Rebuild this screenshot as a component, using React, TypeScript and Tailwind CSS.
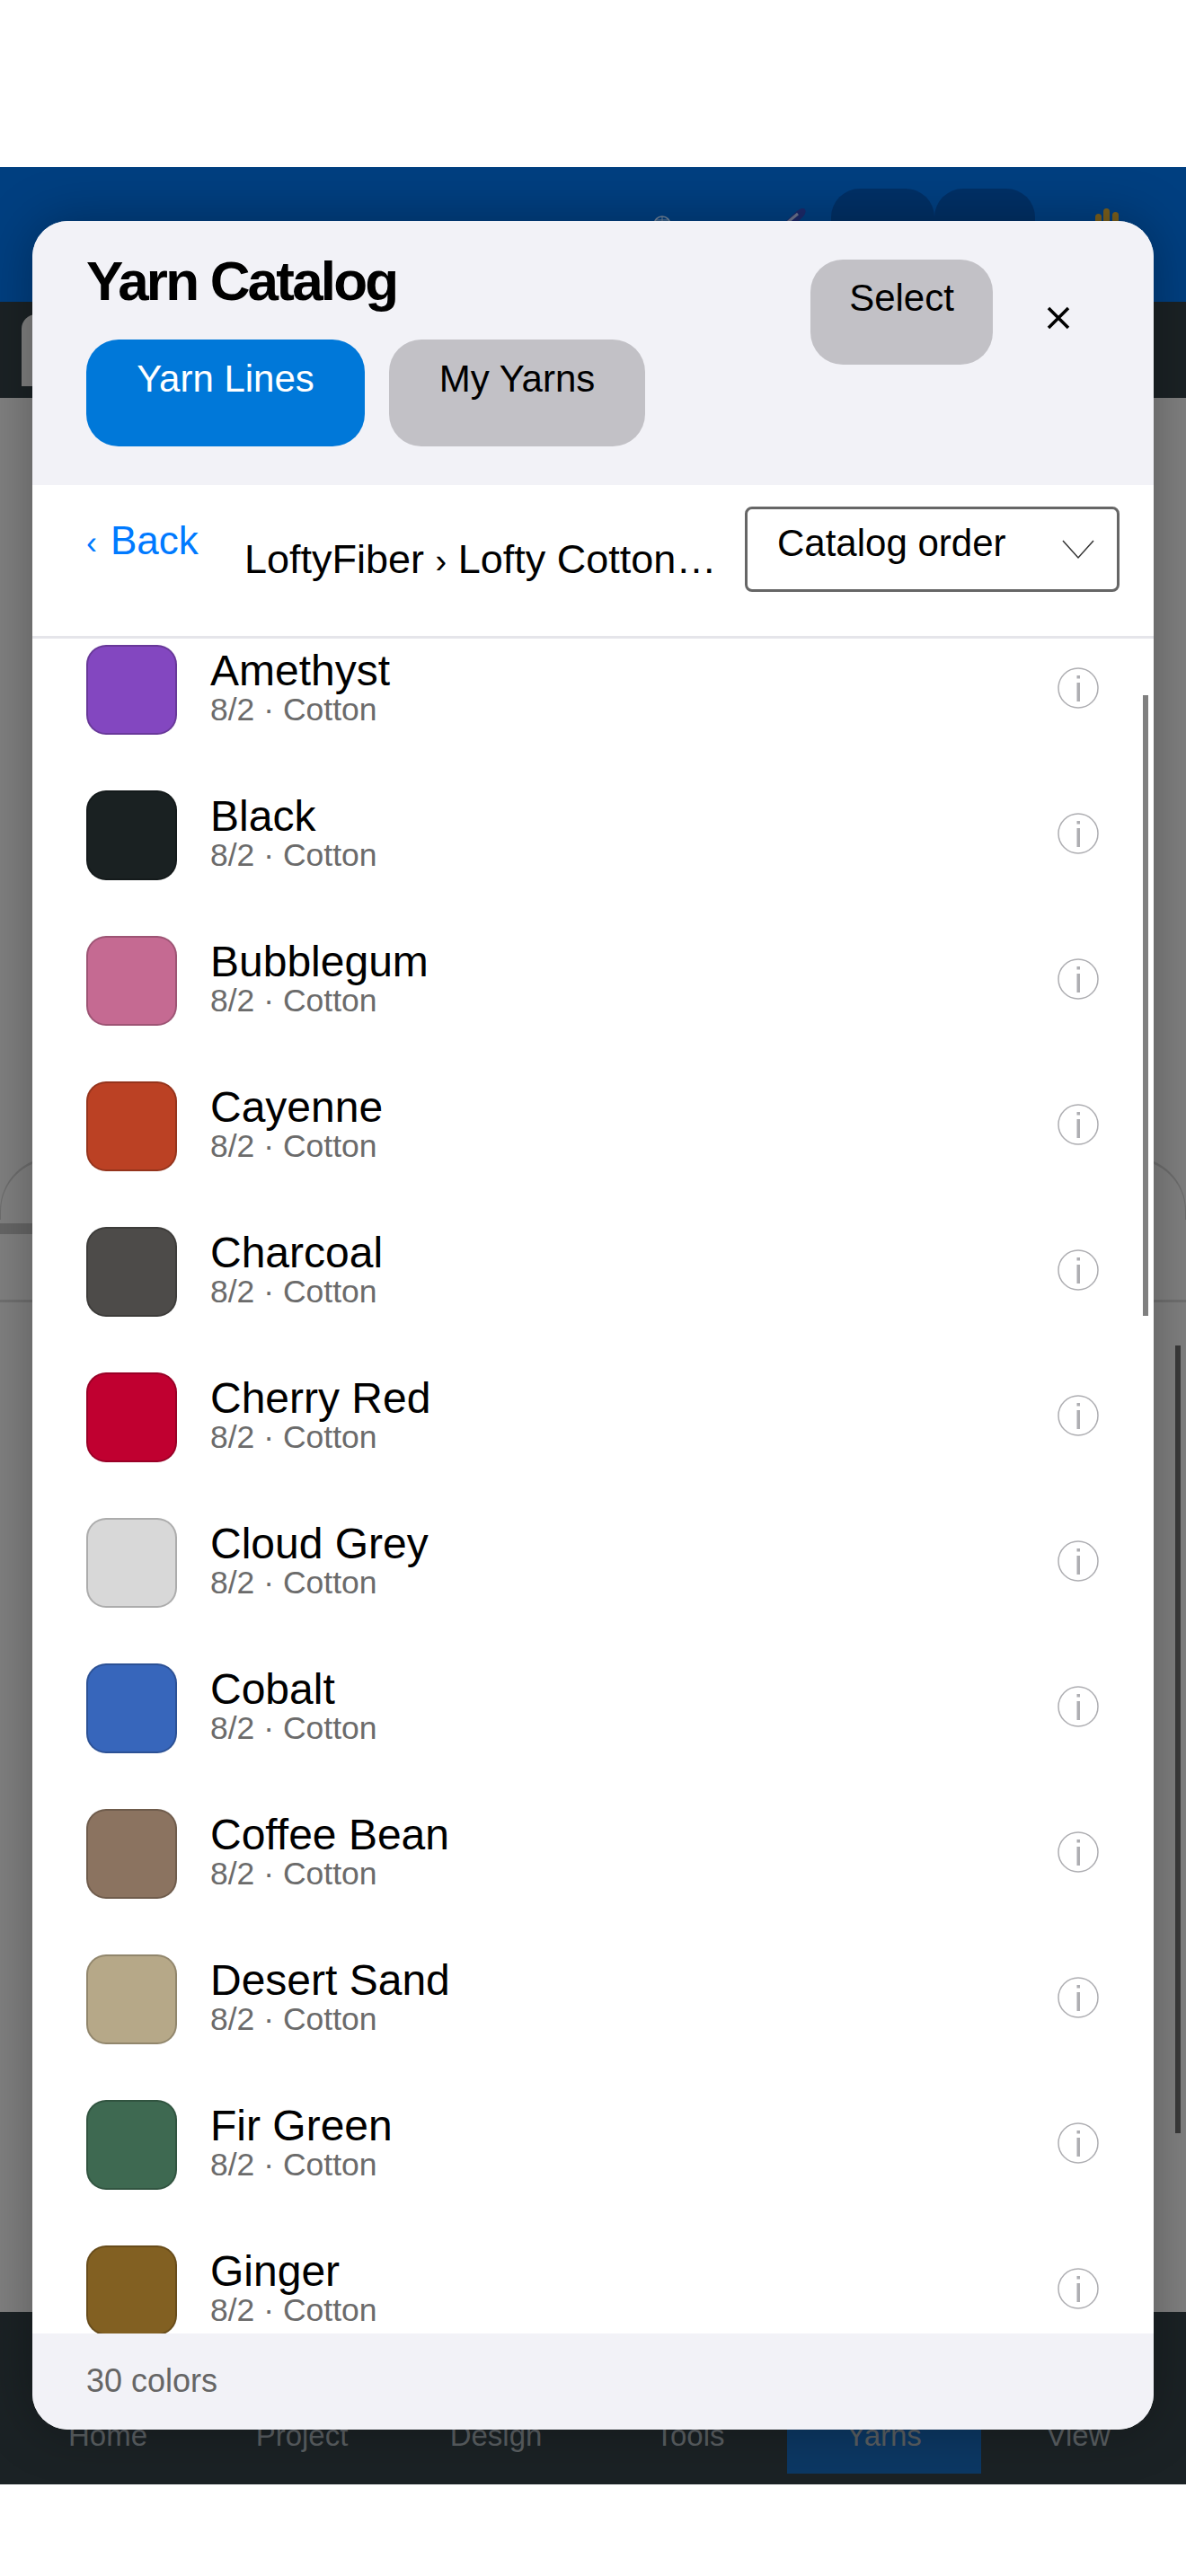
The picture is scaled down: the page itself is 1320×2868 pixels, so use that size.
const YARNS = [
  { name: "Amethyst", color: "#8347c0" },
  { name: "Black", color: "#1a2122" },
  { name: "Bubblegum", color: "#c56a92" },
  { name: "Cayenne", color: "#bb4124" },
  { name: "Charcoal", color: "#4d4b49" },
  { name: "Cherry Red", color: "#c00030" },
  { name: "Cloud Grey", color: "#d8d8d8" },
  { name: "Cobalt", color: "#3766bb" },
  { name: "Coffee Bean", color: "#8b7360" },
  { name: "Desert Sand", color: "#b6a888" },
  { name: "Fir Green", color: "#3e6951" },
  { name: "Ginger", color: "#826022" },
];

const NAV = ["Home", "Project", "Design", "Tools", "Yarns", "View"];

function InfoIcon() {
  return (
    <svg width="46" height="46" viewBox="0 0 46 46" fill="none" className="shrink-0">
      <circle cx="23" cy="23" r="22" stroke="#aeaeb2" strokeWidth="1.5" />
      <rect x="21.5" y="9" width="3.5" height="3.5" fill="#aeaeb2" />
      <rect x="21.5" y="17" width="3.5" height="21" fill="#aeaeb2" />
    </svg>
  );
}

export default function App() {
  return (
    <div className="w-[1320px] h-[2868px] flex flex-col bg-white overflow-hidden font-['Liberation_Sans',Arial,sans-serif]">
      <div className="h-[186px] shrink-0" />

      <div className="relative h-[2580px] shrink-0 flex flex-col">
        {/* App behind the sheet, dimmed */}
        <div className="h-[150px] bg-[#003f80] flex items-start justify-end pr-[75px] pt-[24px]">
          <svg width="20" height="8" viewBox="0 0 20 8" fill="none" className="mt-[30px] mr-[126px] overflow-hidden">
            <circle cx="10" cy="10" r="9" stroke="#76889c" strokeWidth="1.5" />
            <path d="M10 1 V8 M3 5 L17 5" stroke="#76889c" strokeWidth="1" />
          </svg>
          <svg width="24" height="16" viewBox="0 0 24 16" className="mt-[22px] mr-[28px]">
            <path d="M0 16 L14 3 Q20 -2 23 1 Q25 5 20 10 L14 16 Z" fill="#1c2a6b" />
            <path d="M3 16 L15 6" stroke="#6d7590" strokeWidth="3" />
          </svg>
          <div className="w-[115px] h-[100px] rounded-t-[32px] bg-[#003066]" />
          <div className="w-[112px] h-[100px] rounded-t-[32px] bg-[#003066]" />
          <svg width="26" height="16" viewBox="0 0 26 16" fill="#7a5f1c" className="mt-[22px] ml-[67px]">
            <rect x="0" y="6" width="7" height="12" rx="3.5" />
            <rect x="9" y="0" width="7" height="18" rx="3.5" />
            <rect x="19" y="4" width="7" height="14" rx="3.5" />
          </svg>
        </div>
        <div className="h-[107px] bg-[#1b2225] pl-[24px] pt-[14px]">
          <div className="w-[40px] h-[80px] rounded-tl-[16px] bg-[#808080]" />
        </div>
        <div className="flex-1 bg-[#808080] relative">
          <div className="absolute left-0 top-[845px] w-[60px] h-[70px] rounded-tl-[60px] border-t-[3px] border-l-[1px] border-[#6e6e6e]" />
          <div className="absolute right-0 top-[845px] w-[60px] h-[70px] rounded-tr-[60px] border-t-[3px] border-r-[1px] border-[#6e6e6e]" />
          <div className="absolute left-0 top-[919px] w-[40px] h-[12px] bg-[#666666]" />
          <div className="absolute inset-x-0 top-[1004px] h-[3px] bg-[#707070]" />
          <div className="absolute right-[6px] top-[1055px] w-[6px] h-[877px] bg-[#3a3a3a]" />
        </div>
        <div className="h-[192px] bg-[#1b2225]">
          <div className="flex w-full h-[180px]">
            {NAV.map((n, i) => (
              <div
                key={n}
                className={`w-[216px] flex-none flex justify-center items-end pb-[21px] text-[33px] leading-[42px] text-[#5a5f62] ${i === 0 ? "ml-[12px]" : ""} ${i === 4 ? "bg-[#0c3864]" : ""}`}
              >
                {n}
              </div>
            ))}
          </div>
        </div>

        {/* Yarn catalog sheet */}
        <div className="absolute left-[36px] right-[36px] top-[60px] bottom-[61px] rounded-[40px] bg-white overflow-hidden flex flex-col shadow-[0_0_60px_rgba(0,0,0,0.3)]">
          <div className="h-[294px] shrink-0 bg-[#f2f2f7] pl-[60px] pt-[30px] flex items-start">
            <div className="flex-1">
              <h1 className="text-[62px] leading-[72px] font-bold tracking-[-2.8px] text-black mt-[1px] mb-[-1px]">Yarn Catalog</h1>
              <div className="flex gap-[27px] mt-[30px]">
                <button className="w-[310px] h-[119px] rounded-[36px] bg-[#0078d9] text-white text-[42px] leading-[47px] pt-[20px] flex justify-center items-start">Yarn Lines</button>
                <button className="w-[285px] h-[119px] rounded-[36px] bg-[#c2c1c6] text-black text-[42px] leading-[47px] pt-[20px] flex justify-center items-start">My Yarns</button>
              </div>
            </div>
            <button className="mt-[13px] w-[203px] h-[117px] rounded-[36px] bg-[#c2c1c6] text-black text-[42px] leading-[47px] pt-[19px] flex justify-center items-start">Select</button>
            <div className="w-[179px] h-[160px] flex items-center justify-end pr-[93px] mt-[-4px]">
              <svg width="26" height="26" viewBox="0 0 26 26" stroke="#000" strokeWidth="3.5" className="mt-[4px]">
                <path d="M2 2 L24 24 M24 2 L2 24" />
              </svg>
            </div>
          </div>

          <div className="h-[171px] shrink-0 border-b-[3px] border-[#e5e5ea] pl-[60px] pr-[38px] flex items-start">
            <div className="text-[44px] leading-[52px] text-[#007aff] mt-[36px] w-[176px] shrink-0">
              <span className="text-[36px] mr-[15px]">‹</span>Back
            </div>
            <div className="w-[524px] shrink-0 whitespace-nowrap text-[45px] leading-[52px] text-black mt-[57px]">LoftyFiber <span className="text-[38px]">›</span> Lofty Cotton…</div>
            <div className="ml-[33px] mt-[24px] w-[417px] h-[95px] shrink-0 rounded-[8px] border-[3px] border-[#666666] flex items-start pl-[33px] pr-[25px] pt-[12px] text-[42px] leading-[52px] text-black justify-between">
              <span>Catalog order</span>
              <svg width="36" height="22" viewBox="0 0 36 22" fill="none" stroke="#333" strokeWidth="1.5" className="mt-[22px]">
                <path d="M1 1 L18 20 L35 1" />
              </svg>
            </div>
          </div>

          <div className="relative flex-1 min-h-0 overflow-hidden">
            <div className="flex flex-col gap-[62px] pt-[7px] pl-[60px] pr-[61px]">
              {YARNS.map(y => (
                <div key={y.name} className="h-[100px] shrink-0 flex items-start">
                  <div className="w-[101px] h-[100px] rounded-[22px] border-2 border-[#00000033]" style={{ background: y.color }} />
                  <div className="ml-[37px] flex-1">
                    <div className="text-[48px] leading-[46px] mt-[6px] text-black">{y.name}</div>
                    <div className="text-[35.5px] leading-[40px] text-[#6b6b6b]">8/2 · Cotton</div>
                  </div>
                  <div className="mt-[25px]"><InfoIcon /></div>
                </div>
              ))}
            </div>
            <div className="absolute left-[1236px] top-[63px] w-[6px] h-[691px] bg-[#808080]" />
          </div>

          <div className="h-[107px] shrink-0 bg-[#f2f2f7] pl-[60px] flex items-center pb-[2px] text-[36px] text-[#666666]">30 colors</div>
        </div>
      </div>

      <div className="flex-1" />
    </div>
  );
}
